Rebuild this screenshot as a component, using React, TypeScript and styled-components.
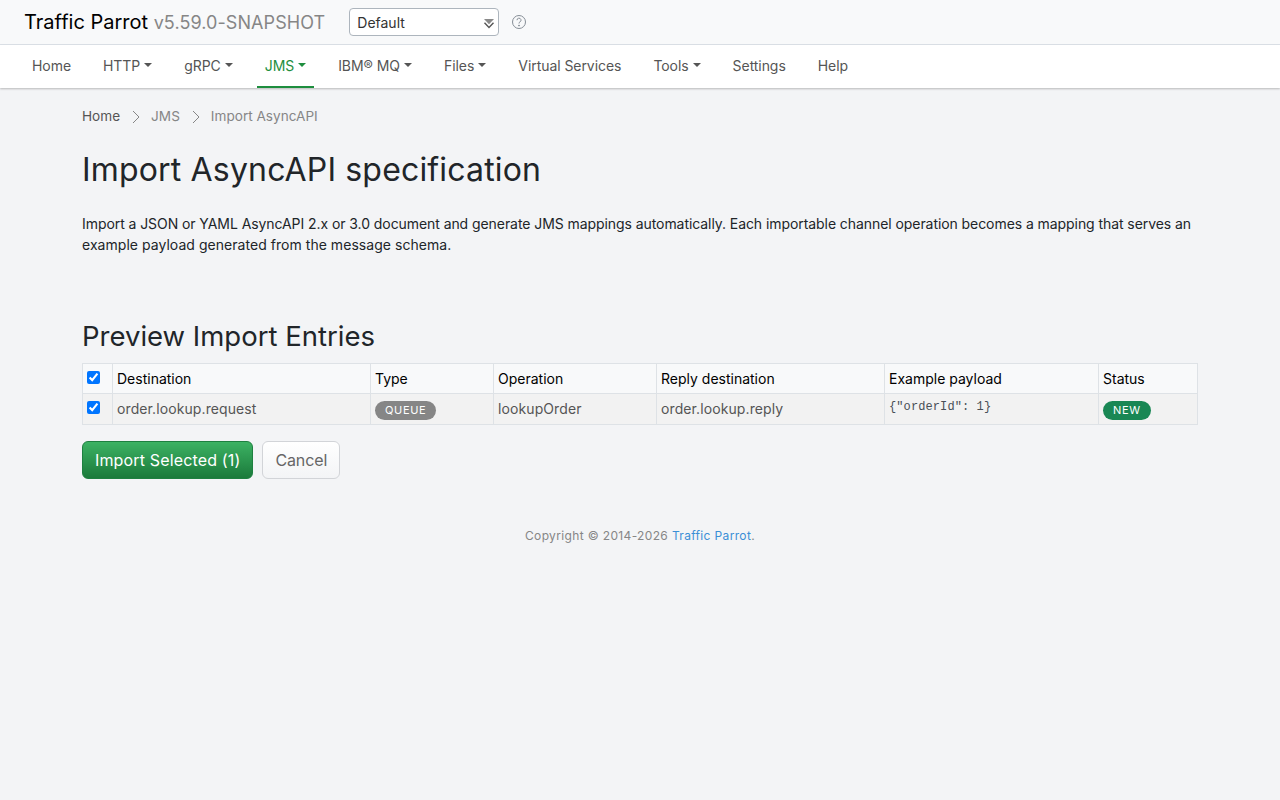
import styled, { createGlobalStyle } from "styled-components";

const GlobalStyle = createGlobalStyle`
  * { box-sizing: border-box; }
  html, body { margin: 0; padding: 0; }
  body {
    background: #f3f4f6;
    color: #212529;
    font-family: Inter, "Liberation Sans", sans-serif;
    font-size: 14px;
    line-height: 1.5;
    min-height: 800px;
  }
`;

const TopBar = styled.header`
  height: 45px;
  display: flex;
  align-items: center;
  padding: 0 24px;
  background: #f8f9fa;
  border-bottom: 1px solid #dde2e8;
`;
const Brand = styled.div`
  font-size: 20px;
  line-height: 30px;
  color: #000;
  white-space: nowrap;
  > span {
    font-size: 18px;
    letter-spacing: 0.08px;
    color: #868686;
  }
`;
const SelectWrap = styled.div`
  position: relative;
  width: 150px;
  height: 28px;
  margin-left: 24px;
`;
const Select = styled.select`
  appearance: none;
  width: 100%;
  height: 100%;
  padding: 0 7px;
  font-family: inherit;
  font-size: 14px;
  color: #333;
  background: #fff;
  border: 1px solid #adb5bd;
  border-radius: 4px;
`;
const SelectArrow = styled.svg`
  position: absolute;
  top: 10px;
  right: 4px;
  width: 12px;
  height: 12px;
  pointer-events: none;
`;
const HelpIcon = styled.svg`
  width: 16px;
  height: 16px;
  margin-left: 12px;
  color: #868e96;
`;

const Nav = styled.nav`
  height: 43px;
  display: flex;
  align-items: stretch;
  gap: 16px;
  padding: 0 24px;
  background: #fff;
  box-shadow: 0 1px 2px rgba(0, 0, 0, 0.25);
`;
const NavItem = styled.a<{ $active?: boolean }>`
  display: flex;
  align-items: center;
  padding: 0 8px;
  font-size: 14px;
  letter-spacing: -0.06px;
  color: ${props => (props.$active ? "#1e8e3e" : "#555")};
  border-bottom: 2px solid ${props => (props.$active ? "#1e8e3e" : "transparent")};
`;
const Caret = styled.span`
  display: inline-block;
  margin-left: 4px;
  margin-bottom: 2px;
  border-top: 4px solid currentColor;
  border-left: 4px solid transparent;
  border-right: 4px solid transparent;
`;

const Main = styled.main`
  padding: 0 82px;
`;
const Breadcrumb = styled.ol`
  display: flex;
  align-items: center;
  margin: 0;
  padding: 18px 0 0;
  list-style: none;
  height: 39px;
  font-size: 13.6px;
  color: #868686;
`;
const Crumb = styled.li<{ $first?: boolean }>`
  display: flex;
  align-items: center;
  color: ${props => (props.$first ? "#555" : "inherit")};
`;
const Chevron = styled.svg`
  width: 10px;
  height: 14px;
  margin: 0 10px 0 11px;
  color: #868686;
`;
const Title = styled.h1`
  margin: 24px 0 0;
  font-size: 32px;
  font-weight: 400;
  letter-spacing: 0.17px;
  line-height: 38px;
  color: #212529;
`;
const Intro = styled.p`
  margin: 24px 0 0;
  font-size: 14px;
  letter-spacing: -0.07px;
  line-height: 21px;
  color: #212529;
  > span {
    letter-spacing: 0.04px;
  }
`;
const SubTitle = styled.h2`
  margin: 64px 0 0;
  font-size: 27.5px;
  font-weight: 400;
  line-height: 34px;
  color: #212529;
`;
const Table = styled.table`
  width: 1116px;
  margin-top: 10px;
  border-collapse: collapse;
  table-layout: fixed;
  font-size: 14px;
`;
const Th = styled.th`
  height: 30px;
  padding: 0 4px;
  font-weight: 400;
  text-align: left;
  color: #000;
  background: #f8f9fa;
  border: 1px solid #dee2e6;
`;
const Td = styled.td`
  height: 31px;
  padding: 0 4px 2px;
  letter-spacing: 0.1px;
  color: #555;
  background: #f2f2f2;
  border: 1px solid #dee2e6;
`;
const BadgeTd = styled(Td)`
  padding: 1px 4px 0;
`;
const CodeTd = styled(Td)`
  padding: 0 4px;
`;
const Check = styled.input`
  display: block;
  width: 13px;
  height: 13px;
  margin: -2px 0 0 0;
`;
const Badge = styled.span<{ $color: string }>`
  display: inline-block;
  padding: 0 10px;
  height: 19px;
  line-height: 19px;
  font-size: 11px;
  font-weight: 400;
  letter-spacing: 0.65px;
  color: #fff;
  border-radius: 10px;
  background: ${props => props.$color};
  vertical-align: middle;
`;
const Code = styled.code`
  display: block;
  margin-top: -5px;
  font-family: "Liberation Mono", monospace;
  font-size: 12px;
  letter-spacing: 0.1px;
  color: #495057;
`;
const Actions = styled.div`
  display: flex;
  gap: 9px;
  margin-top: 16px;
`;
const PrimaryButton = styled.button`
  height: 38px;
  padding: 0 12px;
  font-family: inherit;
  font-size: 16px;
  letter-spacing: 0.15px;
  color: #fff;
  background: linear-gradient(#3cb263, #1b7a3b);
  border: 1px solid #1e8040;
  border-radius: 6px;
`;
const CancelButton = styled.button`
  height: 38px;
  padding: 0 12px;
  font-family: inherit;
  font-size: 16px;
  letter-spacing: -0.1px;
  color: #666;
  background: linear-gradient(#fff, #f3f4f6);
  border: 1px solid #d2d4d8;
  border-radius: 6px;
`;
const Footer = styled.footer`
  margin-top: 48px;
  text-align: center;
  font-size: 12px;
  letter-spacing: 0.35px;
  line-height: 18px;
  color: #868686;
  > a { color: #3b8fd6; }
`;

const columns = [30, 258, 123, 163, 228, 214, 99];
const headers = ["Destination", "Type", "Operation", "Reply destination", "Example payload", "Status"];
const navItems = [
  { label: "Home" },
  { label: "HTTP", menu: true },
  { label: "gRPC", menu: true },
  { label: "JMS", menu: true, active: true },
  { label: "IBM® MQ", menu: true },
  { label: "Files", menu: true },
  { label: "Virtual Services" },
  { label: "Tools", menu: true },
  { label: "Settings" },
  { label: "Help" },
];

function Sep() {
  return (
    <Chevron viewBox="0 0 10 14" fill="none" stroke="currentColor" strokeWidth="1">
      <path d="M2 1l6 6-6 6" />
    </Chevron>
  );
}

export default function App() {
  return (
    <>
      <GlobalStyle />
      <TopBar>
        <Brand>
          Traffic Parrot <span>v5.59.0-SNAPSHOT</span>
        </Brand>
        <SelectWrap>
          <Select defaultValue="Default">
            <option>Default</option>
          </Select>
          <SelectArrow viewBox="0 0 12 12">
            <path d="M1 1h10L6 6.200z" fill="#8a8a8a" />
            <path d="M1.500 4.800L6 9.500l4.500-4.700" fill="none" stroke="#555" strokeWidth="1.400" />
          </SelectArrow>
        </SelectWrap>
        <HelpIcon viewBox="0 0 16 16" fill="none" stroke="currentColor">
          <circle cx="8" cy="8" r="6.500" />
          <path d="M6 6.200a2 2 0 1 1 3 1.700c-.7.4-1 .8-1 1.600" />
          <circle cx="8" cy="11.600" r=".5" fill="currentColor" />
        </HelpIcon>
      </TopBar>
      <Nav>
        {navItems.map(item => (
          <NavItem key={item.label} $active={item.active}>
            {item.label}
            {item.menu && <Caret />}
          </NavItem>
        ))}
      </Nav>
      <Main>
        <Breadcrumb>
          <Crumb $first>Home</Crumb>
          <Sep />
          <Crumb>JMS</Crumb>
          <Sep />
          <Crumb>Import AsyncAPI</Crumb>
        </Breadcrumb>
        <Title>Import AsyncAPI specification</Title>
        <Intro>
          Import a JSON or YAML AsyncAPI 2.x or 3.0 document and generate JMS mappings automatically. Each importable
          channel operation becomes a mapping that serves an{" "}
          <span>example payload generated from the message schema.</span>
        </Intro>
        <SubTitle>Preview Import Entries</SubTitle>
        <Table>
          <colgroup>
            {columns.map((width, i) => (
              <col key={i} style={{ width }} />
            ))}
          </colgroup>
          <thead>
            <tr>
              <Th>
                <Check type="checkbox" defaultChecked />
              </Th>
              {headers.map(h => (
                <Th key={h}>{h}</Th>
              ))}
            </tr>
          </thead>
          <tbody>
            <tr>
              <Td>
                <Check type="checkbox" defaultChecked />
              </Td>
              <Td>order.lookup.request</Td>
              <BadgeTd>
                <Badge $color="#868686">QUEUE</Badge>
              </BadgeTd>
              <Td>lookupOrder</Td>
              <Td>order.lookup.reply</Td>
              <CodeTd>
                <Code>{'{"orderId": 1}'}</Code>
              </CodeTd>
              <BadgeTd>
                <Badge $color="#198754">NEW</Badge>
              </BadgeTd>
            </tr>
          </tbody>
        </Table>
        <Actions>
          <PrimaryButton>Import Selected (1)</PrimaryButton>
          <CancelButton>Cancel</CancelButton>
        </Actions>
        <Footer>
          Copyright © 2014-2026 <a>Traffic Parrot</a>.
        </Footer>
      </Main>
    </>
  );
}
